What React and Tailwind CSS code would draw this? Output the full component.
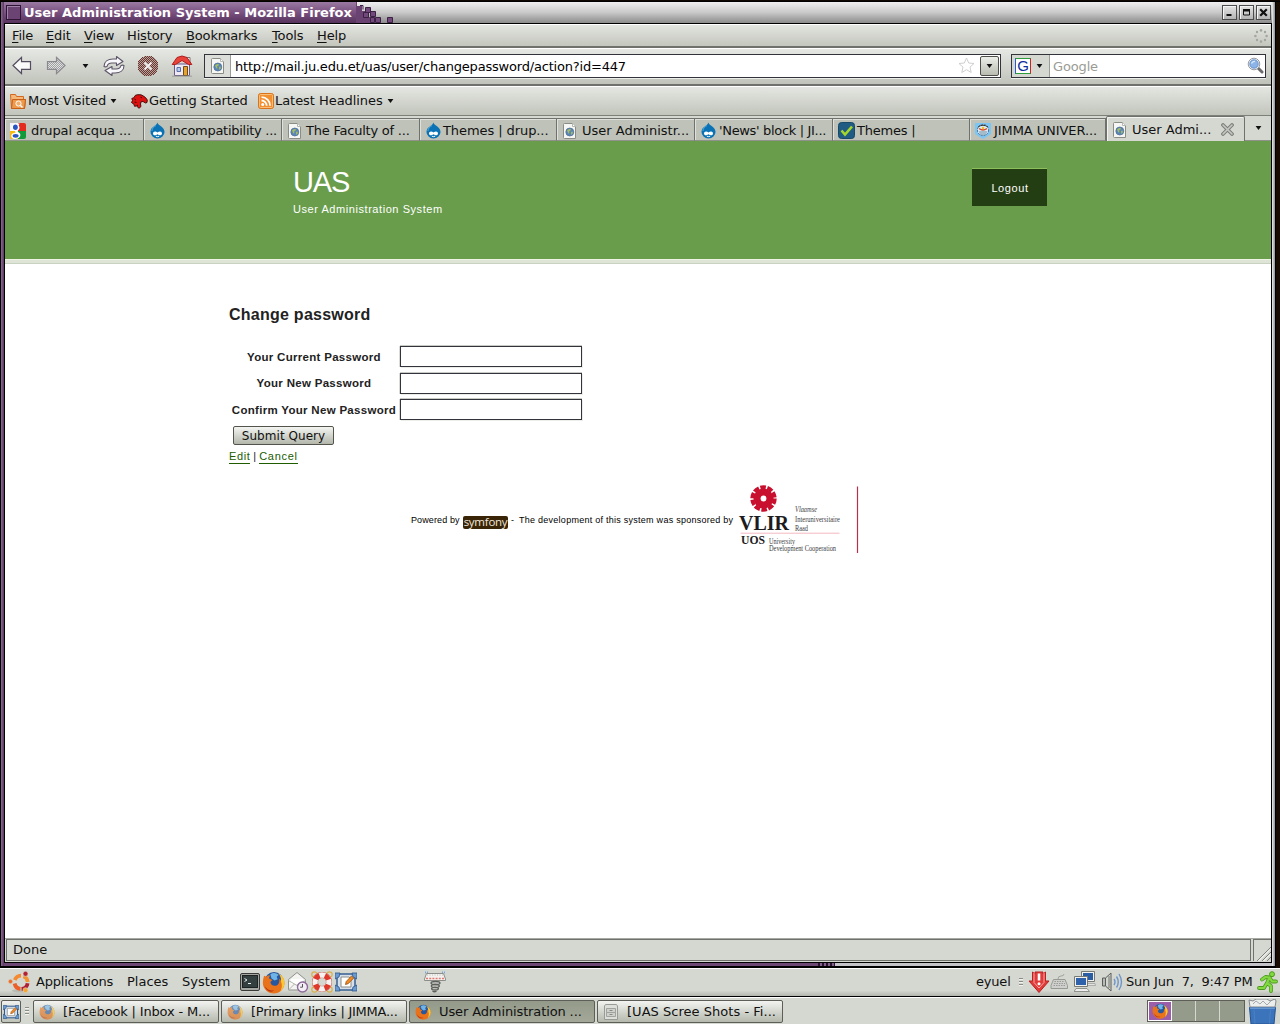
import React from "react";

const SANS = "font-['DejaVu_Sans',sans-serif]";
const HELV = "font-['Liberation_Sans',sans-serif]";

/* ---------- icons ---------- */

const Caret = ({ className = "" }) => (
  <svg width="7" height="6" viewBox="0 0 7 6" className={"shrink-0 " + className}>
    <path d="M0.6 1h5.8L3.5 5z" fill="#111" />
  </svg>
);

const PageIcon = ({ className = "" }) => (
  <svg width="14" height="16" viewBox="0 0 14 16" className={"shrink-0 " + className}>
    <path d="M1.5.5h8l3 3v12h-11a1 1 0 0 1-1-1v-13a1 1 0 0 1 1-1z" fill="#f6f6f4" stroke="#8a8c86" />
    <path d="M9.5.5v3h3" fill="#fff" stroke="#b4b6b0" />
    <circle cx="6.8" cy="9" r="4" fill="#5a86b8" stroke="#4a6c92" strokeWidth=".7" />
    <path d="M4 7.5l2-1.6 2 .3-.6 1.6-1.3.5.3 1.8-1 .5zM8 9l1.6-.6.2 2-1.6 1.6z" fill="#a8bd5b" />
  </svg>
);

const Drupal = () => (
  <svg width="15" height="17" viewBox="0 0 15 17" className="shrink-0">
    <path d="M7.3.5c.7 2 2.200 2.600 4 3.900 2 1.500 3.200 3.400 3.200 5.700a7 6.300 0 0 1-14 0C.5 7 2 5.500 3.800 4.400 5.500 3.300 6.900 2.600 7.300.5z" fill="#0b73b5" />
    <path d="M6 3.500C4 5 2 6 1.900 9" stroke="#4fa9da" strokeWidth="1" fill="none" />
    <path d="M3 11.500c0-2.300 2.600-2.800 4.500-1 2-1.700 4.500-1.300 4.500 1 0 2-2.500 2.300-4.500.8-2 1.500-4.500 1.200-4.500-.8z" fill="#fff" />
    <path d="M5.800 14.200q1.700.9 3.400 0" stroke="#fff" fill="none" />
  </svg>
);

const GoogleFav = () => (
  <svg width="16" height="16" viewBox="0 0 16 16" className="shrink-0">
    <path d="M0 0h8v8H0z" fill="#f2f5fb" />
    <path d="M8 0h6a2 2 0 0 1 2 2v6H8z" fill="#e32b20" />
    <path d="M8 8h8v6a2 2 0 0 1-2 2H8z" fill="#159a3b" />
    <path d="M0 8h8v8H2a2 2 0 0 1-2-2z" fill="#f9b90e" />
    <path d="M9.500.5H6C3 .5 1.200 2.500 1.200 4.800S3 8 5 8c0 1 .3 1.300.8 1.700-2.500.1-4.600 1-4.600 3.200C1.200 15 3 16 5.500 16c2.800 0 4.900-1.600 4.900-3.900 0-2.600-2.900-3-2.900-3.900 0-.8 2-1.200 2-3.400 0-.9-.3-1.500-.8-2z" fill="#fff" />
    <ellipse cx="5.400" cy="4.300" rx="2.400" ry="2.700" fill="#2857c4" />
    <ellipse cx="5.600" cy="12.800" rx="3" ry="1.900" fill="#2857c4" />
  </svg>
);

const CheckFav = () => (
  <svg width="17" height="17" viewBox="0 0 17 17" className="shrink-0">
    <rect x=".5" y=".5" width="16" height="16" rx="3" fill="#1f5b83" stroke="#174968" />
    <path d="M3.500 8.500l3.500 4 7-8" fill="none" stroke="#a5d62c" strokeWidth="2.600" />
  </svg>
);

const JimmaFav = () => (
  <svg width="16" height="16" viewBox="0 0 16 16" className="shrink-0">
    <path d="M0 0h16v11l-8 5-8-5z" fill="#7cc6f5" />
    <circle cx="8" cy="7" r="5.600" fill="#dcebf5" stroke="#4a6d86" strokeDasharray="2 1" />
    <path d="M3 4q5-3.500 10 0" fill="none" stroke="#333" strokeWidth="1" />
    <path d="M4 5.500q4 3 8 0" fill="none" stroke="#d7492a" strokeWidth="1.400" />
    <circle cx="8" cy="5" r="1.300" fill="#f0c02c" />
    <path d="M4 9h8M5 11h6" stroke="#6d8ca3" />
  </svg>
);

const Arrow = ({ flip, dim }) => (
  <svg width="20" height="19" viewBox="0 0 20 19" className={flip ? "shrink-0 -scale-x-100" : "shrink-0"}>
    <defs>
      <pattern id="dither" width="2" height="2" patternUnits="userSpaceOnUse">
        <rect width="2" height="2" fill="#e2e4df" />
        <path d="M0 0h1v1H0zM1 1h1v1H1z" fill="#a09ea5" />
      </pattern>
    </defs>
    <path d="M1 9.500L9.500 1.500v4.200h9v7.600h-9v4.200z" fill={dim ? "url(#dither)" : "#fafafa"} stroke={dim ? "#8b898f" : "#544e60"} strokeWidth="1.200" />
  </svg>
);

const Reload = () => (
  <svg width="22" height="22" viewBox="0 0 22 22" className="shrink-0">
    <g fill="#f8f7fa" stroke="#5d5468" strokeWidth="1.100" strokeLinejoin="round">
      <path d="M1 11.500C1 6.500 5 4 10 4h3.500V1.500L20 6.500 13.500 10.500V8H9c-3 0-4.500 1-5 3.500-1.200.5-2 .5-3 0z" />
      <path d="M21 10.500c0 5-4 7.500-9 7.500H9V20.500L2 15.500 9 11.500v2.500h4c3 0 4.500-1 5-3.500 1.200-.5 2-.5 3 0z" />
    </g>
  </svg>
);

const Stop = () => (
  <svg width="22" height="22" viewBox="0 0 22 22" className="shrink-0" shapeRendering="crispEdges">
    <defs>
      <pattern id="stopDither" width="2" height="2" patternUnits="userSpaceOnUse">
        <rect width="2" height="2" fill="#7a2f2d" />
        <path d="M0 0h1v1H0zM1 1h1v1H1z" fill="#a6aaa0" />
      </pattern>
    </defs>
    <circle cx="11" cy="11" r="10.500" fill="url(#stopDither)" />
    <path d="M7.500 7.500l7 7M14.500 7.500l-7 7" stroke="#f0efee" strokeWidth="2" shapeRendering="auto" />
  </svg>
);

const Home = () => (
  <svg width="22" height="22" viewBox="0 0 22 22" className="shrink-0">
    <path d="M15.500 2.500h3.500v6h-3.500z" fill="#fff" stroke="#777" />
    <path d="M3.500 9h15v11.500h-15z" fill="#efe9f4" stroke="#6a5a86" />
    <path d="M1.200 9.500L6 2.500L11 1l5 1.500 4.800 7H17.500L11 5.500 4.500 9.500z" fill="#e8433b" stroke="#b01c1c" strokeLinejoin="round" />
    <path d="M6 12.500h3.500v4H6z" fill="#b9ccef" stroke="#5a6ea8" />
    <path d="M12.500 11.500h4v9h-4z" fill="#e3a32d" stroke="#704a17" />
    <path d="M1 21.200h20" stroke="#9b9d97" />
  </svg>
);

const Star = () => (
  <svg width="17" height="17" viewBox="0 0 17 17" className="shrink-0">
    <path d="M8.500 1l2.200 5 5.300.5-4 3.600 1.200 5.400-4.700-2.800-4.700 2.800L5 10.100 1 6.500 6.300 6z" fill="#fff" stroke="#cfcfcf" strokeLinejoin="round" />
  </svg>
);

const Magnifier = () => (
  <svg width="17" height="17" viewBox="0 0 17 17" className="shrink-0">
    <path d="M11 11l4 4" stroke="#6b6b6b" strokeWidth="3" strokeLinecap="round" />
    <circle cx="7" cy="7" r="5.800" fill="#e9eef4" stroke="#989ba0" />
    <circle cx="7" cy="7" r="4.200" fill="#8db4e8" stroke="#5c86c4" strokeWidth=".8" />
    <path d="M4.500 6.500q1-2.500 3.500-2" stroke="#dceafc" strokeWidth="1.400" fill="none" />
  </svg>
);

const Throbber = () => (
  <svg width="14" height="14" viewBox="0 0 14 14" className="shrink-0">
    <g fill="#a3a69f">
      <circle cx="7" cy="1.400" r="1.300" /><circle cx="7" cy="12.600" r="1.300" />
      <circle cx="1.400" cy="7" r="1.300" /><circle cx="12.600" cy="7" r="1.300" />
      <circle cx="3" cy="3" r="1.200" /><circle cx="11" cy="3" r="1.200" />
      <circle cx="3" cy="11" r="1.200" /><circle cx="11" cy="11" r="1.200" />
    </g>
  </svg>
);

const FolderOrange = () => (
  <svg width="16" height="16" viewBox="0 0 16 16" className="shrink-0">
    <path d="M.5 1.500h5l1 2h7v3h2l-1 9H1.500z" fill="#f5b87a" stroke="#d2691e" />
    <path d="M2.500 6.500h13l-1 9h-13z" fill="#ee9a4d" stroke="#c85f16" />
    <circle cx="8.500" cy="10.500" r="2.600" fill="#f2ae6a" stroke="#fff" />
    <path d="M10.500 12.500l2 2" stroke="#fff" strokeWidth="1.400" />
  </svg>
);

const DragonHead = () => (
  <svg width="17" height="15" viewBox="0 0 17 15" className="shrink-0">
    <path d="M4.500 1.200l2.500-.5 3 .1 2 1 2.500 1.700 1.800 2.500-.3 2.500-1.500.5-2.500-1.500-2 .3-.5 2.200.5 2.500L8 14.300 5.500 12l-2 .3-.5-2L.5 8.500 1.500 6.500.8 4.500l2-.8z" fill="#dd1210" stroke="#3b0505" strokeWidth=".9" />
    <path d="M3.500 5l1.500 1M3.500 8l2 .5M6 11l1 .7M9.500 3.200l1.500.6" stroke="#3b0505" />
  </svg>
);

const Rss = () => (
  <svg width="16" height="16" viewBox="0 0 16 16" className="shrink-0">
    <rect x=".5" y=".5" width="15" height="15" rx="2" fill="#f28f2f" stroke="#d9731a" />
    <rect x="1.500" y="1.500" width="13" height="13" rx="1" fill="none" stroke="#f9bd7c" />
    <circle cx="4.700" cy="11.400" r="1.500" fill="#fff" />
    <path d="M3.500 7.500a5.200 5.200 0 0 1 5.200 5.200M3.500 4.200a8.600 8.600 0 0 1 8.600 8.600" fill="none" stroke="#fff" strokeWidth="1.800" />
  </svg>
);

const FirefoxIcon = ({ size = 16, faded }) => (
  <svg width={size} height={size} viewBox="0 0 22 22" className={faded ? "shrink-0 opacity-60" : "shrink-0"}>
    <circle cx="11.500" cy="10" r="9" fill="#27589f" />
    <path d="M8 3q4-2.500 8 .5l-2 2 1 2.500-3 1-3-2z" fill="#6fb4e8" />
    <path d="M2 4.500c1 .2 1.500.5 2 1 1-1 2.500-1.500 4-1-1 .8-1.500 1.800-1.200 2.700L10 8.500 8 10.500c.5 3 3 4.200 5.500 3.500 2.500-.8 3.500-3 3-6.500 1 .5 1.500 1.500 1.700 2.500.4-3-.7-5.500-2.200-7.300 3.500 1.800 5.500 5 5.500 8.800 0 5.500-4.500 10-10.200 10S.8 17 .8 11.500C.8 8.500 1.500 6.500 2 4.500z" fill="#e8731a" />
    <path d="M16 2.700c3.500 1.800 5.500 5 5.500 8.800 0 3-1.500 6-4 8 1.500-3 2.200-6 .7-9.500.4-3-.7-5.500-2.200-7.300z" fill="#fbc834" />
    <path d="M2 13c1.500 4.500 6 6.500 10 5.500-3 2.500-8 1.500-10-5.500z" fill="#b93212" />
  </svg>
);

const UbuntuLogo = () => (
  <svg width="22" height="22" viewBox="0 0 22 22" className="shrink-0">
    <ellipse cx="12" cy="19.800" rx="8" ry="1.800" fill="#b9bcb4" />
    <g fill="none" strokeWidth="3.800">
      <path d="M6.800 9A6.800 6.800 0 0 1 13 4.700" stroke="#f58a31" />
      <path d="M15.500 5.200a6.800 6.800 0 0 1 4.200 5.800" stroke="#f59331" />
      <path d="M19.600 12.300a6.800 6.800 0 0 1-6 5.700" stroke="#b01f30" />
      <path d="M12.500 17.900A6.800 6.800 0 0 1 6.600 12.500" stroke="#ec5f28" />
    </g>
    <circle cx="2.500" cy="10.500" r="2.200" fill="#ef6d25" stroke="#d5d8d1" strokeWidth=".6" />
    <circle cx="17.500" cy="2.800" r="2.500" fill="#b5202f" stroke="#d5d8d1" strokeWidth=".6" />
    <circle cx="17.500" cy="19.200" r="2.500" fill="#f6a52e" stroke="#d5d8d1" strokeWidth=".6" />
  </svg>
);

const Terminal = () => (
  <svg width="20" height="18" viewBox="0 0 20 18" className="shrink-0">
    <rect x=".5" y=".5" width="19" height="17" rx="1.500" fill="#a5a7a2" stroke="#3a3b39" />
    <rect x="2.500" y="2.500" width="15" height="12" fill="#33403f" stroke="#1c2322" />
    <path d="M4.500 5.500l2.500 1.500-2.500 1.500M8 10.500h3" stroke="#e9efee" fill="none" />
  </svg>
);

const MailClock = () => (
  <svg width="22" height="22" viewBox="0 0 22 22" className="shrink-0">
    <path d="M1.500 8.500L10 1.500l8.500 7v10.500h-17z" fill="#f4f4f2" stroke="#8e908b" />
    <path d="M4 8h12v5H4z" fill="#fff" />
    <path d="M1.500 9.500l8.500 5 8.500-5M1.500 19l6-6" fill="none" stroke="#b2b4af" />
    <circle cx="15.500" cy="16" r="5" fill="#f3eef5" stroke="#8d6a99" strokeWidth="1.400" />
    <path d="M15.500 13v3.200h-2.300" fill="none" stroke="#555" />
  </svg>
);

const Lifebuoy = () => (
  <svg width="22" height="22" viewBox="0 0 22 22" className="shrink-0">
    <g fill="none" stroke="#d9b04a" strokeWidth="1.200">
      <circle cx="3.500" cy="3.500" r="2.700" /><circle cx="18.500" cy="3.500" r="2.700" />
      <circle cx="3.500" cy="18.500" r="2.700" /><circle cx="18.500" cy="18.500" r="2.700" />
    </g>
    <circle cx="11" cy="11" r="7" fill="none" stroke="#b9261c" strokeWidth="6" />
    <circle cx="11" cy="11" r="7" fill="none" stroke="#f4f3f1" strokeWidth="5.400" />
    <circle cx="11" cy="11" r="7" fill="none" stroke="#e0392b" strokeWidth="5.400" strokeDasharray="5.500 5.500" strokeDashoffset="-2.750" />
  </svg>
);

const DesktopIcon = ({ size = 22 }) => (
  <svg width={size} height={size} viewBox="0 0 22 22" className="shrink-0">
    <rect x="2" y="3" width="18" height="16" fill="#d5dfe9" stroke="#2c558c" strokeWidth="1.400" />
    <path d="M0 2h5l-1 4-4 2zM22 2h-5l1 4 4 2zM0 20h5l-1-4-4-2zM22 20h-5l1-4 4-2z" fill="#6b9bd0" stroke="#2c558c" strokeWidth=".8" />
    <path d="M6 6h8l2 2v8H6z" fill="#fff" stroke="#8b8d88" />
    <path d="M10.500 13.500l.7-3L16.500 5l2.200 2-5.500 5.700z" fill="#f28a22" stroke="#95500f" strokeWidth=".8" />
  </svg>
);

const SpringIcon = () => (
  <svg width="22" height="22" viewBox="0 0 22 22" className="shrink-0">
    <path d="M1 1.500h3M18 1.500h3" stroke="#7fa6d8" strokeDasharray="1 1" strokeWidth="2" />
    <path d="M2.500 2.500h17l2 5.500v1.500H.5V8z" fill="#f3f2f0" stroke="#8c8e89" />
    <path d="M2 7.500h18" stroke="#e47a72" strokeDasharray="2 1.200" strokeWidth="1.400" />
    <path d="M3 4h16" stroke="#b9bbb6" strokeDasharray="1 1.500" />
    <g fill="none" stroke="#5d5f5b" strokeWidth="1.300">
      <ellipse cx="11.500" cy="12" rx="4.500" ry="1.500" /><ellipse cx="11.300" cy="15" rx="4" ry="1.500" />
      <ellipse cx="11" cy="17.700" rx="3.400" ry="1.300" /><path d="M8.500 20q2 1.500 4 0" />
    </g>
  </svg>
);

const CabinetIcon = () => (
  <svg width="14" height="16" viewBox="0 0 14 16" className="shrink-0">
    <path d="M.5 2l1-1.500h11l1 1.500v13.500H.5z" fill="#dddfdb" stroke="#999b96" />
    <path d="M2.500 4.500h9v4h-9zM2.500 8.500h9v4h-9z" fill="#cfd1cc" stroke="#a1a39e" />
    <path d="M5.500 6.500h3M5.500 10.500h3" stroke="#888a85" />
  </svg>
);

const UpdateIcon = () => (
  <svg width="22" height="22" viewBox="0 0 22 22" className="shrink-0">
    <path d="M4.500 1v9H1l10 11.500L21 10h-3.500V1L15 3V1H7v2z" fill="#e03a3a" stroke="#b92020" strokeLinejoin="round" />
    <path d="M6 2v9.500L11 17l5-5.500V2" fill="none" stroke="#f4a9a5" />
    <path d="M11 2.500v7" stroke="#fff" strokeWidth="2.600" />
    <circle cx="11" cy="12.700" r="1.500" fill="#fff" />
  </svg>
);

const KeyboardIcon = () => (
  <svg width="19" height="18" viewBox="0 0 19 18" className="shrink-0">
    <path d="M8 6q0-3 3-3t3-2" fill="none" stroke="#a1a39e" />
    <path d="M3.500 6.500h11.500l2.500 6v3H1v-3z" fill="#cfcfcd" stroke="#979994" />
    <path d="M4.500 8.500h10M4 10.500h11M3.500 12.500h12" stroke="#989a95" strokeDasharray="1.500 1" />
  </svg>
);

const NetworkIcon = () => (
  <svg width="22" height="22" viewBox="0 0 22 22" className="shrink-0">
    <path d="M7.500.5h13v10h-13z" fill="#f1f1ef" stroke="#777974" />
    <path d="M9 2h10v7H9z" fill="#2b5da5" />
    <path d="M9 12.500h12l.5 2H12z" fill="#e3e3e1" stroke="#999" strokeWidth=".7" />
    <path d="M.5 5.500h13v10H.5z" fill="#f1f1ef" stroke="#777974" />
    <path d="M2 7h10v7H2z" fill="#2f62ab" />
    <path d="M2 17.500h11l2.500 3H0z" fill="#eeeeec" stroke="#8f918c" />
  </svg>
);

const VolumeIcon = () => (
  <svg width="22" height="22" viewBox="0 0 22 22" className="shrink-0">
    <path d="M1.500 7h3v8h-3z" fill="#b9bbb6" stroke="#5b5d59" />
    <path d="M4.500 7L10 2v18l-5.500-5z" fill="#d3d5d0" stroke="#5b5d59" />
    <path d="M8 5v12" stroke="#73756f" />
    <path d="M13 8q2 3 0 6M15.500 5.500q3.500 5.500 0 11M18 3q5 8 0 16" fill="none" stroke="#6e95c9" strokeWidth="1.400" />
  </svg>
);

const RunIcon = () => (
  <svg width="21" height="22" viewBox="0 0 21 22" className="shrink-0">
    <g fill="none" strokeLinejoin="round" strokeLinecap="round">
      <path d="M5 8.500l3.500-2.500 4 .5-2.500 5.500 4 3v5M10 12l-3 5H2M12.500 6.500l2.500 4h4" stroke="#4c9a1d" strokeWidth="3.800" />
      <path d="M5 8.500l3.500-2.500 4 .5-2.500 5.500 4 3v5M10 12l-3 5H2M12.500 6.500l2.500 4h4" stroke="#82d941" strokeWidth="2.200" />
    </g>
    <circle cx="15" cy="3.200" r="2.500" fill="#82d941" stroke="#4c9a1d" />
  </svg>
);

const TrashIcon = () => (
  <svg width="29" height="25" viewBox="0 0 29 25" className="shrink-0">
    <path d="M2 8L1 1l4 1 3-2h11l3 2 5-2 1 2-1 6z" fill="#eceeed" stroke="#84888c" />
    <path d="M5 5l3-3 4 3 3-3 4 4 4-4" fill="none" stroke="#a5a9ac" />
    <path d="M1.500 8.500h26L26 25H3z" fill="#3c74bb" stroke="#23528f" />
    <path d="M2 9h25" stroke="#8fb7e4" />
    <path d="M6 10.500l1 14M22.500 10.500l-1 14" stroke="#4a80c5" />
  </svg>
);

/* VLIR-UOS sponsor badge: rosette, wordmark and captions */
const VlirLogo = () => (
  <svg width="122" height="70" viewBox="0 0 122 70" className="shrink-0">
    <circle cx="25.500" cy="13.500" r="11.300" fill="none" stroke="#c8102e" strokeWidth="3.800" strokeDasharray="5.600 1.500" />
    <circle cx="25.500" cy="13.500" r="10" fill="#c8102e" />
    <circle cx="25.500" cy="13.500" r="2.900" fill="#fff" />
    <path d="M2.500 48.200h99" stroke="#f2b8c0" />
    <path d="M119.500 1.500v66.500" stroke="#b5304a" strokeWidth="1.200" />
    <g className="font-['Liberation_Serif',serif]" fill="#1c1c1e">
      <text x="1" y="45" fontSize="20" fontWeight="700" textLength="50" lengthAdjust="spacingAndGlyphs">VLIR</text>
      <text x="3" y="58.500" fontSize="12" fontWeight="700" textLength="24" lengthAdjust="spacingAndGlyphs">UOS</text>
      <g fontSize="7.500" fill="#3c3c42">
        <text x="57" y="26.500" fontStyle="italic" textLength="22" lengthAdjust="spacingAndGlyphs">Vlaamse</text>
        <text x="57" y="36.500" textLength="45" lengthAdjust="spacingAndGlyphs">Interuniversitaire</text>
        <text x="57" y="46" textLength="13" lengthAdjust="spacingAndGlyphs">Raad</text>
        <text x="31" y="59" textLength="26" lengthAdjust="spacingAndGlyphs">University</text>
        <text x="31" y="66" textLength="67" lengthAdjust="spacingAndGlyphs">Development Cooperation</text>
      </g>
    </g>
  </svg>
);

/* ---------- browser window ---------- */

const WinButton = ({ children }) => (
  <div className="flex h-[15px] w-[15px] items-center justify-center border border-[#4b4b4b] bg-linear-to-b from-[#e4e4e4] to-[#b4b4b4] shadow-[inset_1px_1px_0_#f5f5f5]">
    <svg width="9" height="9" viewBox="0 0 9 9">{children}</svg>
  </div>
);

const TitleBar = () => (
  <div className="flex h-[22px] border-b border-black bg-linear-to-b from-[#f0f0f0] via-[#c9c9c9] to-[#8c8c8c]">
    <div className="flex h-[21px] w-[352px] items-center bg-linear-to-b from-[#9a7aa2] via-[#7a5180] to-[#56335d]">
      <div className="ml-[2px] h-[15px] w-[15px] border border-[#2e1535] bg-[#6b4473] shadow-[inset_1px_1px_0_#a283aa]" />
      <span className="ml-[3px] whitespace-nowrap text-[13px] font-bold leading-5 text-white">User Administration System - Mozilla Firefox</span>
    </div>
    <svg width="42" height="21" viewBox="0 0 42 21" className="shrink-0">
      <path d="M0 0h1v4h5v5h4v6h6v6H0z" fill="#6a4372" />
      <g fill="#71497a" stroke="#3c2144">
        <path d="M9.500 5.500h5v5h-5zM14.500 9.500h5v5h-5zM7.500 10.500h5v5h-5zM19.500 15.500h5v5h-5zM14.500 15.500h4v5h-4zM31.500 15.500h5v5h-5z" />
      </g>
      <path d="M4 3.500h3v4" stroke="#3c2144" fill="none" />
    </svg>
    <div className="ml-auto mr-[1px] flex items-center gap-[2px]">
      <WinButton><path d="M1.500 6h5v2h-5z" fill="#111" /></WinButton>
      <WinButton><path d="M1.500 1.500h6v5.500h-6z" fill="none" stroke="#111" strokeWidth="1" /><path d="M1 1h7v2.500H1z" fill="#111" /></WinButton>
      <WinButton><path d="M1.200 1.200l6.600 6.600M7.800 1.200L1.200 7.800" stroke="#111" strokeWidth="2.200" /></WinButton>
    </div>
  </div>
);

const menus = [
  ["", "F", "ile", "w-[34px]"],
  ["", "E", "dit", "w-[38px]"],
  ["", "V", "iew", "w-[43px]"],
  ["Hi", "s", "tory", "w-[59px]"],
  ["", "B", "ookmarks", "w-[86px]"],
  ["", "T", "ools", "w-[45px]"],
  ["", "H", "elp", "w-[40px]"],
];

const MenuBar = () => (
  <div className="flex h-6 items-center border-t border-b-2 border-t-white border-b-[#6f716c] bg-linear-to-b from-[#e3e5e0] to-[#c3c6bd] pl-[7px]">
    {menus.map(([a, u, b, w]) => (
      <div key={u + b} className={"whitespace-nowrap text-[13px] leading-5 tracking-[-0.15px] " + w}>
        {a}<span className="underline decoration-1 underline-offset-2">{u}</span>{b}
      </div>
    ))}
    <div className="ml-auto mr-[3px]"><Throbber /></div>
  </div>
);

const NavBar = () => (
  <div className="flex h-[38px] items-center border-t border-b-2 border-t-white border-b-[#6f716c] bg-linear-to-b from-[#e6e8e4] to-[#c0c3ba] pb-[2px] pl-[7px]">
    <Arrow />
    <div className="ml-[14px]"><Arrow flip dim /></div>
    <Caret className="ml-[16px]" />
    <div className="ml-[14px]"><Reload /></div>
    <div className="ml-[12px]"><Stop /></div>
    <div className="ml-[12px]"><Home /></div>
    <div className="ml-[11px] flex h-6 w-[797px] items-center border border-[#33333b] bg-white shadow-[0_1px_0_#eceee9]">
      <div className="flex h-[22px] w-[26px] items-center justify-center border-r border-[#9b9e96] bg-[#dcdfd9]"><PageIcon /></div>
      <span className="ml-1 whitespace-nowrap pt-[2px] text-[13px] leading-5 tracking-[-0.195px] text-black">http://mail.ju.edu.et/uas/user/changepassword/action?id=447</span>
      <div className="ml-auto mr-[5px]"><Star /></div>
      <div className="mr-[1px] flex h-[20px] w-[19px] items-center justify-center rounded-[2px] border border-[#4d4f48] bg-linear-to-b from-[#eceee9] to-[#b9bdb1]"><Caret /></div>
    </div>
    <div className="ml-[10px] flex h-6 w-[255px] items-center border border-[#33333b] bg-white shadow-[0_1px_0_#eceee9]">
      <div className="flex h-[22px] w-[38px] items-center border-r border-[#9b9e96] bg-[#d5d8d1] pl-[3px]">
        <div className="flex h-4 w-4 items-center justify-center border border-t-[#2c9b3b] border-r-[#c8261d] border-b-[#2c9b3b] border-l-[#2a5bd0] bg-white">
          <span className="font-['Liberation_Sans',sans-serif] text-[15px] leading-[14px] text-[#0a2f9c]">G</span>
        </div>
        <Caret className="ml-[5px]" />
      </div>
      <span className="ml-[3px] pt-[2px] text-[13px] leading-5 tracking-[-0.15px] text-[#9a9c94]">Google</span>
      <div className="ml-auto mr-[1px]"><Magnifier /></div>
    </div>
  </div>
);

const BookmarksBar = () => (
  <div className="flex h-[30px] items-center border-t border-b border-t-white border-b-[#7d7f79] bg-linear-to-b from-[#e4e6e1] to-[#c2c5bc] pl-[5px] text-[13px] leading-5">
    <FolderOrange />
    <span className="ml-[2px] w-[79px] whitespace-nowrap tracking-[-0.08px]">Most Visited</span>
    <Caret className="ml-[3px]" />
    <div className="ml-[14px]"><DragonHead /></div>
    <span className="ml-[1px] w-[99px] whitespace-nowrap tracking-[-0.12px]">Getting Started</span>
    <div className="ml-[10px]"><Rss /></div>
    <span className="ml-[1px] w-[109px] whitespace-nowrap tracking-[-0.05px]">Latest Headlines</span>
    <Caret className="ml-[3px]" />
  </div>
);

const tabs = [
  [GoogleFav, "drupal acqua ...", "w-[139px]", "ml-[4px] tracking-[-0.12px]"],
  [Drupal, "Incompatibility ...", "w-[138px]", "ml-[3px] tracking-[-0.28px]"],
  [PageIcon, "The Faculty of ...", "w-[138px]", "ml-[2px] tracking-[-0.22px]"],
  [Drupal, "Themes | drup...", "w-[137px]", "ml-[1px] tracking-[-0.08px]"],
  [PageIcon, "User Administr...", "w-[138px]", "ml-[3px] tracking-[0px]"],
  [Drupal, "'News' block | JI...", "w-[138px]", "ml-[2px] tracking-[-0.33px]"],
  [CheckFav, "Themes |", "w-[137px]", "ml-[2px] tracking-[-0.2px]"],
  [JimmaFav, "JIMMA UNIVER...", "w-[136px]", "ml-[2px] tracking-[-0.08px]"],
];

const TabStrip = () => (
  <div className="flex h-[25px] items-end bg-[#d5d8d1]">
    {tabs.map(([Icon, label, w, fit], i) => (
      <div key={i} className={"flex h-[23px] shrink-0 items-center border-t border-r border-b border-t-[#6f716c] border-r-[#6f716c] border-b-[#8f928b] bg-[#bec2b8] pl-[4px] pt-[2px] shadow-[inset_1px_1px_0_#dfe1dc] " + w}>
        <div className="flex w-[18px] shrink-0 justify-center"><Icon /></div>
        <span className={"whitespace-nowrap text-[13px] leading-5 " + fit}>{label}</span>
      </div>
    ))}
    <div className="flex h-[25px] w-[139px] shrink-0 items-center rounded-t-[2px] border-t border-r border-l border-[#6f716c] bg-[#d5d8d1] pl-[6px] pt-[1px] shadow-[inset_1px_1px_0_#f3f4f1]">
      <PageIcon />
      <span className="ml-[5px] whitespace-nowrap text-[13px] leading-5">User Admi...</span>
      <svg width="13" height="13" viewBox="0 0 13 13" className="ml-auto mr-[10px]">
        <path d="M2 2l9 9M11 2l-9 9" stroke="#7e807b" strokeWidth="3.800" strokeLinecap="round" />
        <path d="M2 2l9 9M11 2l-9 9" stroke="#c6c8c3" strokeWidth="1.600" strokeLinecap="round" />
      </svg>
    </div>
    <div className="flex h-[25px] flex-1 items-center justify-center border-b border-[#8f928b]"><Caret /></div>
  </div>
);

/* ---------- web page ---------- */

const rows = [
  ["Your Current Password", "h-[27px]", "pt-[3px]"],
  ["Your New Password", "h-[26px]", "pt-[2px]"],
  ["Confirm Your New Password", "h-[27px]", "pt-[3px]"],
];

const WebPage = () => (
  <div className={"flex-1 overflow-hidden bg-white text-[#222] " + HELV}>
    <div className="h-[118px] bg-[#699d4c]">
      <div className="ml-[288px] flex w-[754px] justify-between pt-[27px] text-white">
        <div>
          <h1 className="text-[29px] leading-[28px] tracking-[-1.1px]">UAS</h1>
          <p className="mt-[6px] whitespace-nowrap text-[11px] leading-[14px] tracking-[0.56px]">User Administration System</p>
        </div>
        <div className="flex h-[38px] w-[75px] items-center justify-center border-t border-[#8bbf5a] bg-[#243e13] pt-[1px] pl-[1px] text-[11px] tracking-[0.6px]">Logout</div>
      </div>
    </div>
    <div className="h-[5px] border-t border-b border-t-[#eef3e4] border-b-[#c9d1c0] bg-[#dfe5d6]" />
    <div className="ml-[224px]">
      <h2 className="pt-[41px] text-[16px] font-bold leading-5 tracking-[0.25px]">Change password</h2>
      <div className="mt-[21px]">
        {rows.map(([label, h, pt]) => (
          <div key={label} className={"flex items-start " + h}>
            <div className={"w-[171px] whitespace-nowrap pl-[1px] pr-[2px] text-center text-[11.5px] font-bold leading-4 tracking-[0.3px] " + pt}>{label}</div>
            <input type="password" className="h-[21px] w-[182px] border border-[#33333b] bg-white shadow-[0_-1px_0_#c9cbc6,-1px_0_0_#d9dbd6,1px_1px_0_#eceeea]" />
          </div>
        ))}
      </div>
      <button className={"ml-[4px] flex h-[19px] w-[101px] items-center justify-center rounded-[2px] border border-[#53554d] bg-linear-to-b from-[#f4f5f2] to-[#b3b7ab] text-[12px] tracking-[0.05px] text-[#111] " + SANS}>Submit Query</button>
      <div className="mt-[5px] flex h-[15px] items-start gap-[3px] text-[11px] leading-[13px]">
        <a className="border-b border-[#205c00] tracking-[0.6px] text-[#205c00]">Edit</a>
        <span>|</span>
        <a className="border-b border-[#205c00] tracking-[0.7px] text-[#205c00]">Cancel</a>
      </div>
      <div className="ml-[182px] mt-[20px] flex h-[70px] items-start text-[9px] leading-3 text-black">
        <span className="mt-[29px] w-[52px] whitespace-nowrap tracking-[0.12px]">Powered by</span>
        <span className="mt-[31px] flex h-[13px] w-[45px] items-center justify-center rounded-[2px] bg-[#3a2408] font-['Open_Sans',sans-serif] text-[11.5px] leading-[10px] text-[#eee6da]"><span className="-mt-[2px] tracking-[-0.25px]">symfony</span></span>
        <span className="ml-[3px] mt-[29px] w-[8px]">-</span>
        <span className="mt-[29px] w-[219px] whitespace-nowrap tracking-[0.26px]">The development of this system was sponsored by</span>
        <VlirLogo />
      </div>
    </div>
  </div>
);

const StatusBar = () => (
  <div className="flex h-[24px] gap-[1px] border-t border-[#a7aaa2] bg-[#d5d8d1] pl-[1px] pb-[1px]">
    <div className="w-[1245px] border border-[#6f716c] pl-[6px] text-[13px] leading-[20px]">Done</div>
    <div className="flex flex-1 items-end justify-end border-t border-l border-[#6f716c] ml-[1px]">
      <svg width="15" height="15" viewBox="0 0 15 15">
        <path d="M1 15L15 1M6 15l9-9M11 15l4-4" stroke="#7f817b" />
        <path d="M2 15.500L15.500 2M7 15.500L15.500 7" stroke="#fff" />
      </svg>
    </div>
  </div>
);

/* ---------- desktop panels ---------- */

const Grip = ({ className = "" }) => (
  <div className={"h-[9px] w-[4px] shrink-0 bg-[repeating-linear-gradient(to_bottom,#8a8c87_0_1px,#f2f3f1_1px_2px,#d5d8d1_2px_3px)] " + className} />
);

const TopPanel = () => (
  <div className="flex h-[29px] items-center border-t border-b border-t-white border-b-black bg-linear-to-b from-[#d5d8d1] from-80% to-[#b3b6af] pb-[1px] pl-2 text-[13px] leading-5">
    <UbuntuLogo />
    <span className="ml-[6px] w-[91px] whitespace-nowrap tracking-[-0.2px]">Applications</span>
    <span className="w-[55px] whitespace-nowrap">Places</span>
    <span className="w-[58px] whitespace-nowrap">System</span>
    <Terminal />
    <div className="ml-[2px] flex gap-[2px]">
      <FirefoxIcon size={23} />
      <MailClock />
      <Lifebuoy />
      <DesktopIcon />
    </div>
    <div className="ml-[67px]"><SpringIcon /></div>
    <span className="ml-[530px] w-[42px] whitespace-nowrap tracking-[-0.2px]">eyuel</span>
    <Grip className="ml-[1px]" />
    <div className="ml-[5px]"><UpdateIcon /></div>
    <KeyboardIcon />
    <div className="ml-[5px]"><NetworkIcon /></div>
    <div className="ml-[5px]"><VolumeIcon /></div>
    <span className="ml-[3px] w-[128px] whitespace-pre tracking-[-0.2px]">Sun Jun  7,  9:47 PM</span>
    <div className="ml-[3px]"><RunIcon /></div>
  </div>
);

const tasks = [
  [<FirefoxIcon faded />, "[Facebook | Inbox - M...", false, "tracking-[-0.17px]"],
  [<FirefoxIcon faded />, "[Primary links | JIMMA...", false, "tracking-[-0.26px]"],
  [<FirefoxIcon />, "User Administration ...", true, "tracking-[-0.12px]"],
  [<CabinetIcon />, "[UAS Scree Shots - Fi...", false, "tracking-[0.03px]"],
];

const TaskBar = () => (
  <div className="flex h-[27px] items-center border-t border-white bg-[#d5d8d1] pl-[1px] text-[13px] leading-5">
    <div className="mt-[1px] flex h-[23px] w-[20px] items-center justify-center rounded-[2px] border border-[#5c5e57] bg-linear-to-b from-[#f0f1ee] to-[#bfc3b8]"><DesktopIcon size={16} /></div>
    <Grip className="ml-[4px]" />
    <div className="ml-[4px] mt-[1px] flex gap-[2px]">
      {tasks.map(([icon, label, active, fit]) => (
        <div key={label} className={"flex h-[23px] w-[186px] items-center rounded-[2px] border border-[#5c5e57] pl-[5px] " + (active ? "bg-linear-to-b from-[#949a8a] to-[#a3a899]" : "bg-linear-to-b from-[#f3f4f1] to-[#b5b9ad]")}>
          <div className="flex w-4 justify-center">{icon}</div>
          <span className={"ml-[8px] whitespace-nowrap " + fit}>{label}</span>
        </div>
      ))}
    </div>
    <div className="ml-[364px] flex h-[22px] w-[98px] border border-[#5c5e57] bg-[#959b8b]">
      <div className="flex w-6 items-center justify-center border border-white bg-[#9c5ea8]"><FirefoxIcon /></div>
      <div className="w-6 border-r border-[#d5d8d1]" />
      <div className="w-6 border-r border-[#d5d8d1]" />
      <div className="w-6" />
    </div>
    <div className="ml-[3px] self-end"><TrashIcon /></div>
  </div>
);

export default function App() {
  return (
    <div className={"flex h-[1024px] w-[1280px] flex-col overflow-hidden bg-black text-[#111] " + SANS}>
      <div className="h-[2px] bg-linear-to-b from-[#1c0f02] to-black" />
      <div className="flex h-[966px] bg-[#180c03]">
        <div className="flex h-[966px] w-[1276px] border-r border-l border-black bg-black">
          <div className="h-[964px] w-[3px] bg-linear-to-r from-[#8c6a94] to-[#593760]" />
          <div className="flex w-[1268px] flex-col">
            <TitleBar />
            <div className="flex h-[938px] flex-col border-r border-l border-black">
              <MenuBar />
              <NavBar />
              <BookmarksBar />
              <TabStrip />
              <WebPage />
              <StatusBar />
            </div>
            <div className="flex h-[6px] border-t border-b-2 border-black">
              <div className="w-[814px] bg-[#6d4875]" />
              <div className="w-[17px] bg-[repeating-linear-gradient(to_right,#2b1431_0_2px,#84628c_2px_4px)]" />
              <div className="flex-1 bg-[#c4c4c8]" />
            </div>
          </div>
          <div className="h-[964px] flex-1 bg-linear-to-r from-[#f0f0f0] to-[#8d8d93]" />
        </div>
      </div>
      <TopPanel />
      <TaskBar />
    </div>
  );
}
